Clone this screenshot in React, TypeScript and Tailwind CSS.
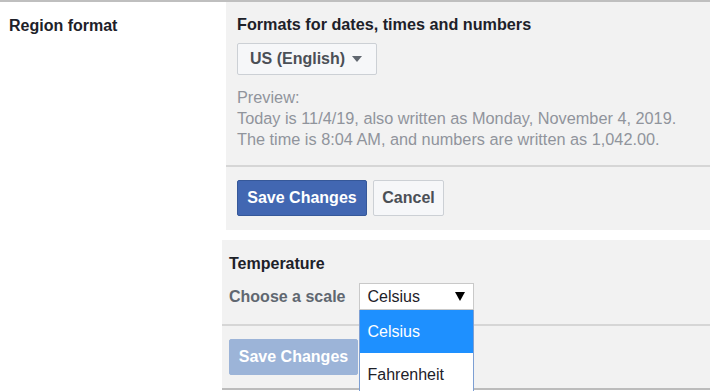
import { useState } from 'react';

const Triangle = ({ className }: { className?: string }) => (
  <svg className={className} viewBox="0 0 10 6" fill="currentColor">
    <path d="M0 0h10L5 6z" />
  </svg>
);

export default function App() {
  const [scale] = useState('Celsius');

  return (
    <div className="w-[710px] h-[391px] overflow-hidden bg-white border-t-2 border-[#bfbfbf] flex font-['Liberation_Sans',Arial,sans-serif] text-[16px] text-[#1d2129]">
      <div className="w-[222px] shrink-0 pl-[9px] pt-[14px]">
        <div className="font-bold leading-5">Region format</div>
      </div>

      <div className="flex-1 flex flex-col">
        {/* Date / time format */}
        <div className="ml-[4px] bg-[#f2f2f2]">
          <div className="px-[11px] pt-3 pb-[15px]">
            <div className="font-bold leading-5 text-[16.2px]">Formats for dates, times and numbers</div>
            <button className="mt-[9px] h-8 w-[140px] pl-3 flex items-center gap-[7px] bg-[#f6f7f9] border border-[#ccd0d5] rounded-[2px] font-bold text-[#4b4f56]">
              US (English)
              <Triangle className="w-[10px] h-[6px] text-[#606770]" />
            </button>
            <div className="mt-3 leading-[21px] text-[16.3px] text-[#90949c]">
              <div>Preview:</div>
              <div>Today is 11/4/19, also written as Monday, November 4, 2019.</div>
              <div>The time is 8:04 AM, and numbers are written as 1,042.00.</div>
            </div>
          </div>
          <div className="h-[2px] bg-[#d6d6d6]" />
          <div className="px-[11px] pt-[13px] pb-[14px] flex gap-[6px]">
            <button className="h-9 w-[130px] flex items-center justify-center bg-[#4267b2] border border-[#365899] rounded-[2px] font-bold text-white">
              Save Changes
            </button>
            <button className="h-9 w-[71px] flex items-center justify-center bg-[#f6f7f9] border border-[#ccd0d5] rounded-[2px] font-bold text-[#4b4f56]">
              Cancel
            </button>
          </div>
        </div>

        {/* Temperature */}
        <div className="mt-[10px] bg-[#f2f2f2] border-b-2 border-[#bcbcbc]">
          <div className="px-[7px] pt-[14px] pb-[14px]">
            <div className="font-bold leading-5">Temperature</div>
            <div className="mt-[9px] flex items-center gap-[13px]">
              <span className="font-bold leading-5 text-[#606770]">Choose a scale</span>
              <div className="relative">
                <div className="h-[27px] w-[115px] pl-[8px] pr-[8px] flex items-center justify-between bg-white border border-[#c9c9c9]">
                  <span>{scale}</span>
                  <svg className="w-[10px] h-[9px] text-black" viewBox="0 0 10 9" fill="currentColor">
                    <path d="M0 0h10L5 9z" />
                  </svg>
                </div>
                <div className="absolute left-0 top-[27px] w-[115px] bg-white border-x border-[#7d9fd3] z-10">
                  <div className="h-[43px] pl-[8px] flex items-center bg-[#1e90ff] text-white">Celsius</div>
                  <div className="h-[43px] pl-[8px] flex items-center text-[#1d2129]">Fahrenheit</div>
                </div>
              </div>
            </div>
          </div>
          <div className="h-[2px] bg-[#d6d6d6]" />
          <div className="px-[7px] pt-[13px] pb-[13px]">
            <button disabled className="h-9 w-[129px] flex items-center justify-center bg-[#9cb4d8] border border-[#9cb4d8] rounded-[2px] font-bold text-white">
              Save Changes
            </button>
          </div>
        </div>
      </div>
    </div>
  );
}
